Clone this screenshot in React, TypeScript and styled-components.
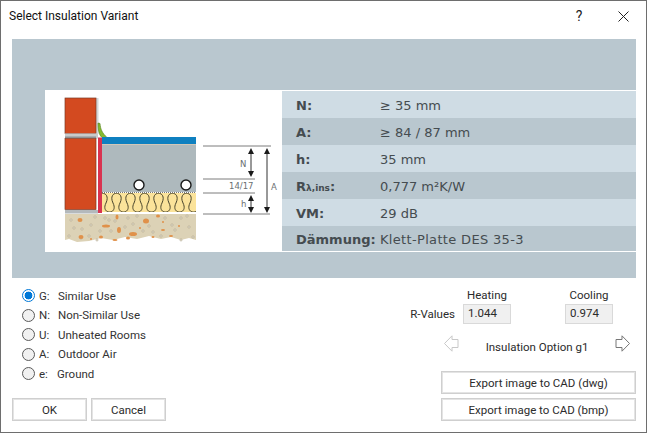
import { useState } from 'react';
import styled, { createGlobalStyle } from 'styled-components';

const GlobalStyle = createGlobalStyle`
  html, body {
    margin: 0;
    padding: 0;
    background: #fff;
    overflow: hidden;
  }
  * {
    box-sizing: border-box;
  }
`;

const Window = styled.div`
  width: 647px;
  height: 433px;
  display: flex;
  flex-direction: column;
  background: #fff;
  border: 1px solid #6e6e6e;
  font-family: Roboto, "Open Sans", sans-serif;
  font-size: 11.5px;
  color: #2b2b2b;
`;

const TitleBar = styled.div`
  height: 38px;
  flex: none;
  display: flex;
  align-items: flex-start;
  padding: 7px 17px 0 8px;
`;

const Title = styled.div`
  flex: 1;
  font-size: 12px;
  line-height: 16px;
  color: #111;
`;

const HelpButton = styled.div`
  width: 12px;
  margin-right: 33px;
  text-align: center;
  font-size: 14px;
  line-height: 16px;
  color: #222;
`;

const CloseIcon = styled.svg`
  width: 11px;
  height: 11px;
  margin-top: 3px;
`;

const Panel = styled.div`
  height: 239px;
  flex: none;
  margin: 0 10px 0 11px;
  padding: 51px 0 26px 33px;
  background: #b9c7cf;
`;

const PanelInner = styled.div`
  height: 162px;
  display: flex;
  background: #fff;
`;

const Drawing = styled.svg`
  width: 237px;
  height: 162px;
  flex: none;
  display: block;
`;

const DataTable = styled.div`
  flex: 1;
  display: flex;
  flex-direction: column;
  padding: 1px 0;
  font-family: "DejaVu Sans", Verdana, sans-serif;
  font-size: 13px;
  color: #454c50;
`;

const DataRow = styled.div<{ $dark?: boolean; $short?: boolean }>`
  height: ${p => (p.$short ? '25px' : '27px')};
  display: flex;
  align-items: center;
  padding: 2px 0 0 14px;
  background: ${p => (p.$dark ? '#b9c7cf' : '#cfdce4')};
`;

const DataLabel = styled.div`
  width: 84px;
  flex: none;
  font-weight: bold;
  white-space: nowrap;
`;

const DataValue = styled.div<{ $spaced?: boolean }>`
  letter-spacing: ${p => (p.$spaced ? '0.33px' : '0')};
  white-space: nowrap;
`;

const Subscript = styled.span`
  font-size: 9px;
`;

const Bottom = styled.div`
  flex: 1;
  display: flex;
  justify-content: space-between;
  padding: 0 10px 11px 11px;
`;

const LeftColumn = styled.div`
  width: 154px;
  display: flex;
  flex-direction: column;
`;

const RadioList = styled.div`
  display: flex;
  flex-direction: column;
  padding: 8px 0 0 10px;
`;

const RadioRow = styled.label`
  height: 19.5px;
  display: flex;
  align-items: center;
  white-space: nowrap;
  line-height: 16px;
  color: #333;
`;

const RadioInput = styled.input`
  appearance: none;
  width: 13px;
  height: 13px;
  margin: 0 4px 0 0;
  border-radius: 50%;
  border: 1px solid #5a5a5a;
  background: #f1f1f1;
  &:checked {
    border-color: #0078d7;
    background: radial-gradient(circle, #0078d7 0 3.6px, #fff 4.2px);
  }
`;

const RadioKey = styled.span<{ $narrow?: boolean }>`
  width: ${p => (p.$narrow ? '18px' : '19px')};
  flex: none;
`;

const ButtonRow = styled.div`
  margin-top: auto;
  display: flex;
  gap: 4px;
`;

const DialogButton = styled.button<{ $wide?: boolean }>`
  width: ${p => (p.$wide ? '195px' : '75px')};
  height: 23px;
  padding: 0;
  background: #fff;
  border: 1px solid #cfcfcf;
  outline: 1px solid #e4e4e4;
  outline-offset: -2px;
  font-family: inherit;
  font-size: 11.5px;
  color: #2b2b2b;
`;

const RightColumn = styled.div`
  width: 223px;
  display: flex;
  flex-direction: column;
  align-items: flex-end;
`;

const RValues = styled.div`
  display: flex;
  align-items: flex-end;
  padding: 9px 23px 0 0;
`;

const RLabel = styled.div`
  line-height: 16px;
  margin: 0 8px 2px 0;
  white-space: nowrap;
`;

const ValueColumn = styled.div<{ $gap?: boolean }>`
  width: 48px;
  margin-left: ${p => (p.$gap ? '54px' : '0')};
  display: flex;
  flex-direction: column;
  align-items: center;
  gap: 1px;
`;

const ValueHeading = styled.div`
  line-height: 16px;
`;

const ValueBox = styled.div`
  width: 48px;
  height: 20px;
  padding-left: 4px;
  background: #f0f0f0;
  border: 1px solid #d9d9d9;
  line-height: 16px;
`;

const OptionNav = styled.div`
  width: 186px;
  margin: 11px 6px 0 0;
  display: flex;
  align-items: flex-start;
  justify-content: space-between;
`;

const ArrowIcon = styled.svg`
  width: 15px;
  height: 17px;
  display: block;
`;

const OptionLabel = styled.div`
  line-height: 16px;
  margin-top: 4px;
`;

const ExportButtons = styled.div`
  margin-top: auto;
  display: flex;
  flex-direction: column;
  gap: 4px;
`;

const rows = [
  { label: 'N:', value: '≥ 35 mm' },
  { label: 'A:', value: '≥ 84 / 87 mm', dark: true },
  { label: 'h:', value: '35 mm' },
  { label: 'R', sub: 'λ,ins', value: '0,777 m²K/W', dark: true },
  { label: 'VM:', value: '29 dB' },
  { label: 'Dämmung:', value: 'Klett-Platte DES 35-3', dark: true, short: true },
];

const radios = [
  { key: 'G:', text: 'Similar Use' },
  { key: 'N:', text: 'Non-Similar Use' },
  { key: 'U:', text: 'Unheated Rooms' },
  { key: 'A:', text: 'Outdoor Air' },
  { key: 'e:', text: 'Ground', narrow: true },
];

const chips = [
  [35, 130, 5, 4], [72, 127, 3, 5], [101, 131, 6, 5], [113, 126, 4, 3], [118, 132, 2, 2],
  [61, 136, 8, 3], [74, 140, 4, 6], [36, 147, 5, 4], [88, 144, 8, 4], [83, 148, 4, 3],
  [56, 147, 4, 3], [118, 140, 4, 2], [126, 146, 4, 2], [108, 147, 3, 2], [70, 150, 5, 2],
  [46, 149, 2, 2], [134, 136, 2, 2], [95, 138, 2, 2],
];

const specks = [
  [26, 130], [29, 138], [37, 139], [46, 135], [50, 127], [55, 141], [44, 146], [52, 150],
  [66, 141], [70, 131], [83, 128], [80, 137], [92, 126], [98, 141], [108, 142], [116, 146],
  [127, 135], [136, 128], [144, 137], [148, 147], [136, 150], [24, 146], [36, 148], [64, 130],
  [120, 128], [142, 126], [130, 140], [88, 134], [104, 136], [60, 128],
];

const insulationWave = () => {
  let d = 'M54,113';
  for (let x = 54; x < 150; x += 14) {
    d += ` C${x - 6},100 ${x + 13},100 ${x + 7},113 C${x + 1},125 ${x + 20},125 ${x + 14},113`;
  }
  return d;
};

const DimArrow = ({ x, y1, y2 }: { x: number; y1: number; y2: number }) => (
  <g>
    <line x1={x} y1={y1 + 2} x2={x} y2={y2 - 2} stroke="#333" strokeWidth="1" />
    <path d={`M${x},${y1} l-3,6 h6 Z M${x},${y2} l-3,-6 h6 Z`} fill="#1a1a1a" />
  </g>
);

const SectionDrawing = () => (
  <Drawing viewBox="0 0 237 162">
    <defs>
      <clipPath id="insulation-clip">
        <rect x="57" y="103" width="94" height="19" />
      </clipPath>
    </defs>
    <rect x="51" y="8" width="2.5" height="36" fill="#d4d7d9" />
    <rect x="20" y="8" width="31" height="35.5" fill="#d34a20" stroke="#7b3a26" strokeWidth="0.7" />
    <rect x="20" y="43.5" width="33" height="5" fill="#c8cbcc" />
    <rect x="20" y="46.5" width="31" height="1.5" fill="#8e9294" />
    <rect x="20" y="48.5" width="31" height="71" fill="#d34a20" stroke="#7b3a26" strokeWidth="0.7" />
    <rect x="20" y="120" width="33" height="3.5" fill="#b4b9bc" />
    <path d="M53,33 l2,0.5 C55.5,39 57,43 62,47.5 h-5 C54,45 53,40 53,33 Z" fill="#86bb2e" stroke="#4e7a18" strokeWidth="0.6" />
    <rect x="53" y="47.5" width="4" height="75.5" fill="#d93350" />
    <rect x="57" y="47" width="94" height="7" fill="#0f80c0" />
    <rect x="57" y="54" width="94" height="1" fill="#d2c7b8" />
    <rect x="57" y="55" width="94" height="47" fill="#aeb9bd" />
    <line x1="57" y1="102.5" x2="151" y2="102.5" stroke="#777" strokeWidth="1" strokeDasharray="1 1" />
    <rect x="57" y="103" width="94" height="19" fill="#fbe39a" />
    <path d={insulationWave()} fill="none" stroke="#4a452c" strokeWidth="1" clipPath="url(#insulation-clip)" />
    <circle cx="94" cy="95" r="5" fill="#fff" stroke="#1a1a1a" strokeWidth="1.4" />
    <circle cx="141" cy="95" r="5" fill="#fff" stroke="#1a1a1a" strokeWidth="1.4" />
    <path
      d="M20,124 H151 V150 L144,148 L136,150 L126,147 L116,149 L104,146 L92,149 L80,147 L68,150 L56,148 L44,151 L32,152 L24,149 L20,150 Z"
      fill="#dcd2b6"
    />
    {specks.map(([x, y], i) => (
      <circle key={i} cx={x} cy={y} r="1.1" fill="#f4efe0" stroke="#8a7f62" strokeWidth="0.4" />
    ))}
    {chips.map(([x, y, w, h], i) => (
      <ellipse key={i} cx={x} cy={y} rx={w / 2} ry={h / 2} fill="#e0914a" />
    ))}
    <g stroke="#7d7d7d" strokeWidth="1">
      <line x1="158" y1="56" x2="226" y2="56" />
      <line x1="158" y1="89" x2="210" y2="89" />
      <line x1="158" y1="103" x2="210" y2="103" />
      <line x1="158" y1="124" x2="225" y2="124" />
    </g>
    <DimArrow x={206} y1={58} y2={87} />
    <DimArrow x={206} y1={105} y2={123} />
    <DimArrow x={222} y1={58} y2={123} />
    <g fontFamily="'DejaVu Sans', sans-serif" fontSize="8.5" fill="#6a6f72">
      <text x="195" y="77">N</text>
      <text x="184" y="99">14/17</text>
      <text x="196" y="117">h</text>
      <text x="226" y="100">A</text>
    </g>
  </Drawing>
);

const App = () => {
  const [selected, setSelected] = useState('G:');

  return (
    <>
      <GlobalStyle />
      <Window>
        <TitleBar>
          <Title>Select Insulation Variant</Title>
          <HelpButton>?</HelpButton>
          <CloseIcon viewBox="0 0 11 11">
            <path d="M0.5,0.5 L10.5,10.5 M10.5,0.5 L0.5,10.5" stroke="#222" strokeWidth="1" fill="none" />
          </CloseIcon>
        </TitleBar>
        <Panel>
          <PanelInner>
            <SectionDrawing />
            <DataTable>
              {rows.map(row => (
                <DataRow key={row.label} $dark={row.dark} $short={row.short}>
                  <DataLabel>
                    {row.label}
                    {row.sub && <Subscript>{row.sub}</Subscript>}
                    {row.sub && ':'}
                  </DataLabel>
                  <DataValue $spaced={row.short}>{row.value}</DataValue>
                </DataRow>
              ))}
            </DataTable>
          </PanelInner>
        </Panel>
        <Bottom>
          <LeftColumn>
            <RadioList>
              {radios.map(radio => (
                <RadioRow key={radio.key}>
                  <RadioInput
                    type="radio"
                    name="variant"
                    checked={selected === radio.key}
                    onChange={() => setSelected(radio.key)}
                  />
                  <RadioKey $narrow={radio.narrow}>{radio.key}</RadioKey>
                  {radio.text}
                </RadioRow>
              ))}
            </RadioList>
            <ButtonRow>
              <DialogButton>OK</DialogButton>
              <DialogButton>Cancel</DialogButton>
            </ButtonRow>
          </LeftColumn>
          <RightColumn>
            <RValues>
              <RLabel>R-Values</RLabel>
              <ValueColumn>
                <ValueHeading>Heating</ValueHeading>
                <ValueBox>1.044</ValueBox>
              </ValueColumn>
              <ValueColumn $gap>
                <ValueHeading>Cooling</ValueHeading>
                <ValueBox>0.974</ValueBox>
              </ValueColumn>
            </RValues>
            <OptionNav>
              <ArrowIcon viewBox="0 0 15 17">
                <path d="M0.5,8.5 L8,0.8 V4.5 H14 V12.5 H8 V16.2 Z" fill="#fff" stroke="#c8c8c8" strokeWidth="1" />
              </ArrowIcon>
              <OptionLabel>Insulation Option g1</OptionLabel>
              <ArrowIcon viewBox="0 0 15 17">
                <path d="M14.5,8.5 L7,0.8 V4.5 H1 V12.5 H7 V16.2 Z" fill="#fff" stroke="#777" strokeWidth="1" />
              </ArrowIcon>
            </OptionNav>
            <ExportButtons>
              <DialogButton $wide>Export image to CAD (dwg)</DialogButton>
              <DialogButton $wide>Export image to CAD (bmp)</DialogButton>
            </ExportButtons>
          </RightColumn>
        </Bottom>
      </Window>
    </>
  );
};

export default App;
